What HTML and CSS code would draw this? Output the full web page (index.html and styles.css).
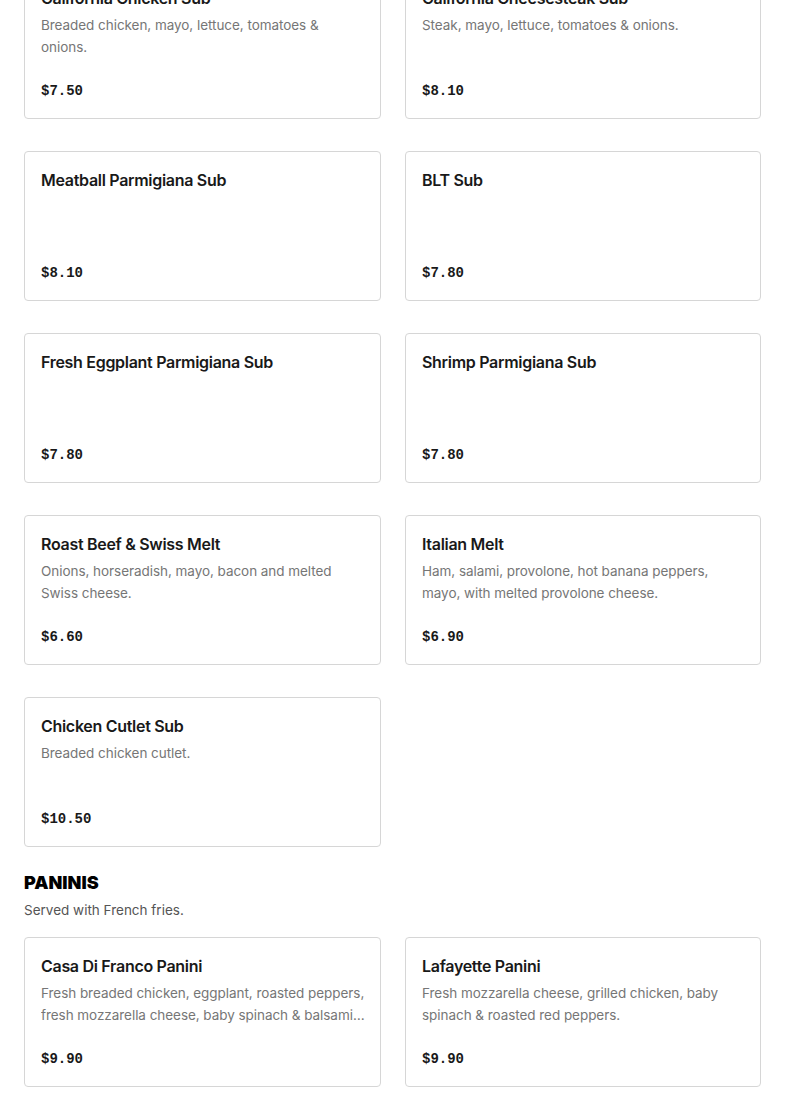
FILE: index.html
```html
<!DOCTYPE html>
<html lang="en">
<head>
<meta charset="utf-8">
<title>Menu</title>
<link rel="stylesheet" href="styles.css">
</head>
<body>
<main class="menu">
  <section class="section section-subs">
    <div class="grid">
      <article class="card">
        <h3 class="card-title">California Chicken Sub</h3>
        <p class="card-desc">Breaded chicken, mayo, lettuce, tomatoes &amp; onions.</p>
        <div class="card-price">$7.50</div>
      </article>
      <article class="card">
        <h3 class="card-title">California Cheesesteak Sub</h3>
        <p class="card-desc">Steak, mayo, lettuce, tomatoes &amp; onions.</p>
        <div class="card-price">$8.10</div>
      </article>
      <article class="card">
        <h3 class="card-title">Meatball Parmigiana Sub</h3>
        <div class="card-price">$8.10</div>
      </article>
      <article class="card">
        <h3 class="card-title">BLT Sub</h3>
        <div class="card-price">$7.80</div>
      </article>
      <article class="card">
        <h3 class="card-title">Fresh Eggplant Parmigiana Sub</h3>
        <div class="card-price">$7.80</div>
      </article>
      <article class="card">
        <h3 class="card-title">Shrimp Parmigiana Sub</h3>
        <div class="card-price">$7.80</div>
      </article>
      <article class="card">
        <h3 class="card-title">Roast Beef &amp; Swiss Melt</h3>
        <p class="card-desc">Onions, horseradish, mayo, bacon and melted Swiss cheese.</p>
        <div class="card-price">$6.60</div>
      </article>
      <article class="card">
        <h3 class="card-title">Italian Melt</h3>
        <p class="card-desc">Ham, salami, provolone, hot banana peppers, mayo, with melted provolone cheese.</p>
        <div class="card-price">$6.90</div>
      </article>
      <article class="card">
        <h3 class="card-title">Chicken Cutlet Sub</h3>
        <p class="card-desc">Breaded chicken cutlet.</p>
        <div class="card-price">$10.50</div>
      </article>
    </div>
  </section>

  <section class="section section-paninis">
    <h2 class="section-title">PANINIS</h2>
    <p class="section-desc">Served with French fries.</p>
    <div class="grid">
      <article class="card">
        <h3 class="card-title">Casa Di Franco Panini</h3>
        <p class="card-desc">Fresh breaded chicken, eggplant, roasted peppers, fresh mozzarella cheese, baby spinach &amp; balsamic glaze.</p>
        <div class="card-price">$9.90</div>
      </article>
      <article class="card">
        <h3 class="card-title">Lafayette Panini</h3>
        <p class="card-desc">Fresh mozzarella cheese, grilled chicken, baby spinach &amp; roasted red peppers.</p>
        <div class="card-price">$9.90</div>
      </article>
    </div>
  </section>
</main>
</body>
</html>
```

FILE: styles.css
```css
* {
  box-sizing: border-box;
}

html, body {
  margin: 0;
  padding: 0;
  background: #ffffff;
}

body {
  font-family: "Inter", "Liberation Sans", sans-serif;
  color: #191919;
}

.menu {
  padding: 0 24px;
  margin-top: -31px;
}

.grid {
  display: grid;
  grid-template-columns: 357px 356px;
  column-gap: 24px;
  row-gap: 32px;
}

.card {
  height: 150px;
  border: 1px solid #d6d6d6;
  border-radius: 4px;
  padding: 16px 12px 17px 16px;
  display: flex;
  flex-direction: column;
  background: #fff;
}

.card-title {
  margin: 0;
  font-size: 16px;
  line-height: 24px;
  font-weight: 600;
  color: #191919;
  letter-spacing: -0.3px;
}

.card-desc {
  margin: 4px 0 0;
  font-size: 13.5px;
  line-height: 22px;
  color: #767676;
  letter-spacing: -0.05px;
  display: -webkit-box;
  -webkit-line-clamp: 2;
  -webkit-box-orient: vertical;
  overflow: hidden;
}

.card-price {
  margin-top: auto;
  font-family: "Liberation Mono", monospace;
  font-weight: 700;
  font-size: 14px;
  line-height: 20px;
  color: #191919;
}

.section-paninis {
  margin-top: 25px;
}

.section-title {
  margin: 0;
  font-size: 18px;
  line-height: 22px;
  font-weight: 900;
  color: #000;
}

.section-desc {
  margin: 5px 0 16px;
  font-size: 13.5px;
  line-height: 22px;
  color: #555555;
}
```
